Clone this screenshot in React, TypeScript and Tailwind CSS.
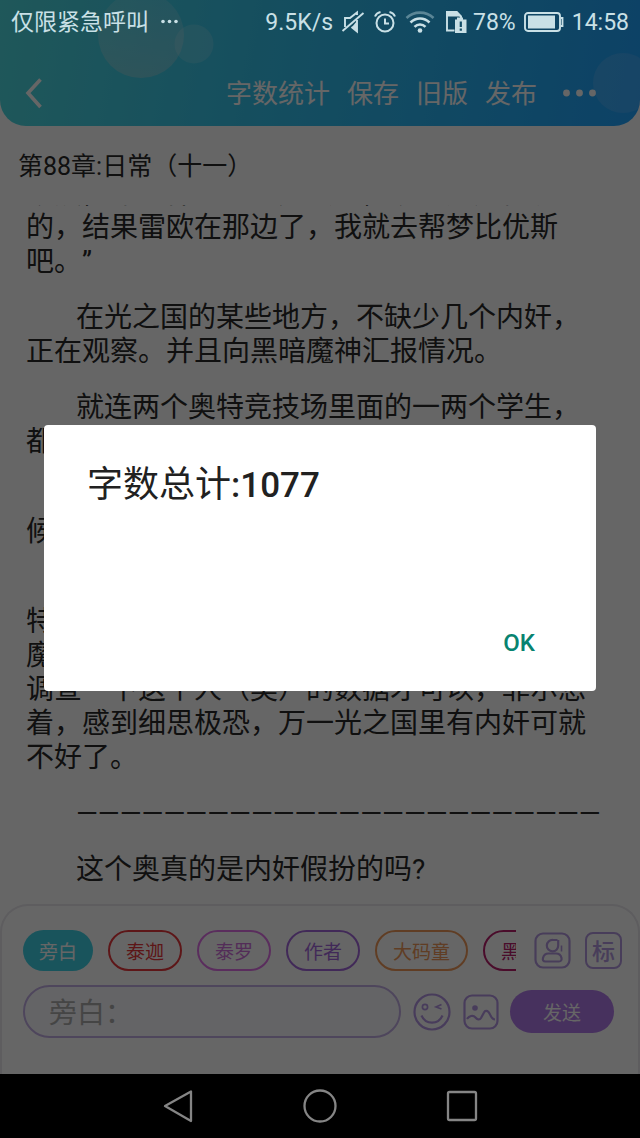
import React from "react";

const chips = [
  { name: "旁白", style: "bg-[#3fd2e6] text-white" },
  { name: "泰迦", style: "border-2 border-[#e8383c] text-[#e8383c]" },
  { name: "泰罗", style: "border-2 border-[#e072e8] text-[#d070dc]" },
  { name: "作者", style: "border-2 border-[#a468dc] text-[#a468dc]" },
  { name: "大码童", style: "border-2 border-[#f09a5a] text-[#f09a5a]" },
  { name: "黑", style: "border-2 border-[#b8206c] text-[#b8206c]" },
];

const paragraphs: { indent: boolean; lines: string[] }[] = [
  {
    indent: false,
    lines: ["既然，你们都已经有办法了，现在这边情况", "的，结果雷欧在那边了，我就去帮梦比优斯", "吧。”"],
  },
  { indent: true, lines: ["在光之国的某些地方，不缺少几个内奸，", "正在观察。并且向黑暗魔神汇报情况。"] },
  { indent: true, lines: ["就连两个奥特竞技场里面的一两个学生，", "都"] },
  { indent: true, lines: ["", "候"] },
  {
    indent: true,
    lines: [
      "",
      "特",
      "魔",
      "调查一下这个人（奥）的数据才可以，菲尔想",
      "着，感到细思极恐，万一光之国里有内奸可就",
      "不好了。",
    ],
  },
  { indent: true, lines: ["————————————————————————"] },
  { indent: true, lines: ["这个奥真的是内奸假扮的吗?"] },
];

function StatusBar() {
  return (
    <div className="absolute inset-x-0 top-0 z-20 flex h-11 items-center px-[11px] text-[23px] leading-none text-[#c9e0e6]">
      <span>仅限紧急呼叫</span>
      <svg className="ml-3 h-2 w-5" viewBox="0 0 20 8" fill="currentColor" aria-hidden="true">
        <circle cx="2" cy="3.500" r="1.800" />
        <circle cx="8.500" cy="3.500" r="1.800" />
        <circle cx="15" cy="3.500" r="1.800" />
      </svg>
      <span className="ml-auto">9.5K/s</span>
      <svg className="ml-2 h-6 w-6" viewBox="0 0 24 24" fill="none" stroke="currentColor" strokeWidth="1.900" aria-hidden="true">
        <path d="M4 17V8h5l7-5.500V5" />
        <path d="M16 10v11.500l-5.500-4.500" />
        <path d="M1.500 21 22.500 3" />
        <path d="M11 17l5-6v10z" fill="currentColor" stroke="none" />
      </svg>
      <svg className="ml-2 h-6 w-6" viewBox="0 0 24 24" fill="none" stroke="currentColor" strokeWidth="2" aria-hidden="true">
        <circle cx="12" cy="13" r="8.500" />
        <path d="M12 8.500V13.500h4" />
        <path d="M2 6.500C3 4 5 2.500 7.500 2M22 6.500C21 4 19 2.500 16.500 2" />
      </svg>
      <svg className="ml-2 h-6 w-[30px]" viewBox="0 0 30 24" fill="none" stroke="currentColor" strokeWidth="2.600" aria-hidden="true">
        <path d="M1.500 8C9 .800 21 .800 28.500 8" opacity=".4" />
        <path d="M5.500 12.500C11 7.200 19 7.200 24.500 12.500" />
        <path d="M9.500 16.800C12.500 13.800 17.500 13.800 20.500 16.800" />
        <circle cx="15" cy="20.500" r="2.300" fill="currentColor" stroke="none" />
      </svg>
      <svg className="ml-2.5 h-6 w-[22px]" viewBox="0 0 22 24" aria-hidden="true">
        <path d="M9.500 20.500H2V2h9.500l4.500 4.500V9" fill="none" stroke="currentColor" strokeWidth="1.900" />
        <path d="M1 1h11l5 5.500H1z" fill="currentColor" />
        <path d="M12 7.500h6v2h3.500v13.500H10V9.500h2z" fill="currentColor" />
        <path d="M15.800 11.500v5.500M15.800 18.500v2.300" stroke="#124c66" strokeWidth="2.200" />
      </svg>
      <span className="ml-[6px]">78%</span>
      <svg className="ml-2 h-6 w-10" viewBox="0 0 40 24" aria-hidden="true">
        <rect x="1" y="3" width="35" height="18" rx="3" fill="none" stroke="currentColor" strokeWidth="1.900" />
        <rect x="4" y="5.500" width="27" height="13" fill="currentColor" />
        <path d="M37 8h1.500v8H37" fill="none" stroke="currentColor" strokeWidth="1.800" />
      </svg>
      <span className="ml-2">14:58</span>
    </div>
  );
}

function Header() {
  const button = "whitespace-nowrap";
  return (
    <header className="relative shrink-0 overflow-hidden rounded-b-[26px] bg-linear-100 from-[#4fdbe0] via-[#36c4ec] via-40% to-[#20a4ff] pt-[62px] text-white">
      <svg className="absolute left-0 top-0 h-full w-56" viewBox="0 0 224 126" aria-hidden="true">
        <defs>
          <linearGradient id="bubble" x1="0" y1="0" x2="0" y2="1">
            <stop offset="0" stopColor="#fff" stopOpacity=".12" />
            <stop offset="1" stopColor="#ffd9cf" stopOpacity=".26" />
          </linearGradient>
        </defs>
        <circle cx="194" cy="44" r="19.500" fill="#fff" opacity=".15" />
        <circle cx="141" cy="35" r="43" fill="url(#bubble)" />
      </svg>
      <svg className="absolute right-0 top-0 h-full w-20" viewBox="0 0 80 126" aria-hidden="true">
        <circle cx="63" cy="83" r="30" fill="#c8d4ff" opacity=".16" />
      </svg>
      <div className="relative flex h-16 items-center gap-[17px] pl-5 pr-[42px] text-[26px] leading-none">
        <button type="button" aria-label="返回" className="mr-auto">
          <svg className="h-9 w-7" viewBox="0 0 28 36" fill="none" stroke="currentColor" strokeWidth="3.600" aria-hidden="true">
            <path d="M20.500 3.500 8 17l12.500 14" />
          </svg>
        </button>
        <button type="button" className={button}>字数统计</button>
        <button type="button" className={button}>保存</button>
        <button type="button" className={button}>旧版</button>
        <button type="button" className={button}>发布</button>
        <button type="button" aria-label="更多" className="pl-2">
          <svg className="h-3 w-9" viewBox="0 0 36 12" fill="currentColor" aria-hidden="true">
            <circle cx="4.500" cy="5" r="3.400" />
            <circle cx="17.500" cy="5" r="3.400" />
            <circle cx="30.500" cy="5" r="3.400" />
          </svg>
        </button>
      </div>
    </header>
  );
}

function Composer() {
  return (
    <form
      className="flex h-[170px] shrink-0 flex-col gap-[14px] rounded-t-[28px] border-2 border-b-0 border-[#eae8ee] bg-white pl-[21px] pr-4 pt-6"
      onSubmit={(e) => e.preventDefault()}
    >
      <div className="flex items-center">
        <div className="flex min-w-0 max-w-[493px] flex-1 gap-[15px] overflow-hidden">
          {chips.map((c) => (
            <button
              key={c.name}
              type="button"
              className={`h-[41px] shrink-0 rounded-full px-4 pt-[3px] text-[19px] leading-none ${c.style}`}
            >
              {c.name}
            </button>
          ))}
        </div>
        <button type="button" aria-label="角色" className="ml-[18px] text-[#b49ae0]">
          <svg className="h-[37px] w-[37px]" viewBox="0 0 37 37" fill="none" stroke="currentColor" strokeWidth="2.200" aria-hidden="true">
            <rect x="1.500" y="1.500" width="34" height="34" rx="7.500" />
            <path d="M23.500 8h-4.500a5.700 5.700 0 1 0 5.200 5.500V8" />
            <path d="M27.500 13.500v6" strokeWidth="1.600" />
            <path d="M11.500 29.500c-2.500 0-3-1.500-2.500-3.500.700-3 3-4.500 5.500-4.500h7.500c3 0 5 2 5.500 4.500.4 2-.5 3.500-2.500 3.500z" />
          </svg>
        </button>
        <button
          type="button"
          className="ml-[14px] h-[37px] w-[37px] shrink-0 rounded-lg border-2 border-[#b49ae0] pt-[3px] text-[23px] font-medium leading-none text-[#b49ae0]"
        >
          标
        </button>
      </div>
      <div className="flex items-center">
        <input
          aria-label="旁白"
          placeholder="旁白："
          className="h-[53px] w-0 max-w-[378px] flex-1 rounded-full border-2 border-[#c4aee6] bg-[#fafaff] px-6 pt-1 text-[28px] text-black outline-none placeholder:text-[#adadad]"
        />
        <button type="button" aria-label="表情" className="ml-3 text-[#b496e4]">
          <svg className="h-[38px] w-[38px]" viewBox="0 0 38 38" fill="none" stroke="currentColor" strokeWidth="2.200" aria-hidden="true">
            <circle cx="19" cy="19" r="17.500" />
            <circle cx="12" cy="14" r="2.600" strokeWidth="1.700" />
            <path d="M28.500 11.500 23 14l5.500 2" strokeWidth="1.700" />
            <path d="M8.500 22.500c4 9.500 17 9.500 21 0" />
          </svg>
        </button>
        <button type="button" aria-label="图片" className="ml-3 text-[#b496e4]">
          <svg className="h-[36px] w-[36px]" viewBox="0 0 36 36" fill="none" stroke="currentColor" strokeWidth="2.200" aria-hidden="true">
            <rect x="1.500" y="1.500" width="33" height="33" rx="7.500" />
            <circle cx="12" cy="14" r="2.800" fill="currentColor" stroke="none" />
            <path d="M4 25c2-3 6-4.500 8.500-1.500 1.500 2 4 3 5.500.5l3-5.500c1-2 3-2 4.500-.5 2 2 2.500 7.500 6.500 7.500" />
          </svg>
        </button>
        <button type="submit" className="ml-[11px] h-[43px] w-[104px] shrink-0 rounded-full bg-[#b27aea] pt-[3px] text-[19px] leading-none text-white">
          发送
        </button>
      </div>
    </form>
  );
}

function CountDialog() {
  return (
    <div className="absolute inset-0 z-10 flex items-center bg-black/60 px-11 pt-[41px]">
      <div role="dialog" aria-modal="true" aria-labelledby="count-title" className="flex w-full flex-col rounded bg-white px-[43px] pb-6 pt-[38px]">
        <h2 id="count-title" className="text-4xl leading-[44px] text-[#212121]">
          字数总计<span className="text-[35px] font-medium">:1077</span>
        </h2>
        <button type="button" className="mt-[111px] h-12 self-end px-[18px] text-2xl font-medium text-[#088370]">
          OK
        </button>
      </div>
    </div>
  );
}

function NavBar() {
  return (
    <nav className="flex h-16 shrink-0 items-center justify-center gap-[106px] bg-black text-[#858585]">
      <button type="button" aria-label="后退">
        <svg className="h-9 w-9" viewBox="0 0 36 36" fill="none" stroke="currentColor" strokeWidth="2.300" strokeLinejoin="round" aria-hidden="true">
          <path d="M31 3.500v29.500L5 18z" />
        </svg>
      </button>
      <button type="button" aria-label="主页">
        <svg className="h-9 w-9" viewBox="0 0 36 36" fill="none" stroke="currentColor" strokeWidth="2.300" aria-hidden="true">
          <circle cx="18" cy="18" r="15.500" />
        </svg>
      </button>
      <button type="button" aria-label="最近任务">
        <svg className="h-9 w-9" viewBox="0 0 36 36" fill="none" stroke="currentColor" strokeWidth="2.300" aria-hidden="true">
          <rect x="4" y="4" width="28" height="28" rx="1.500" />
        </svg>
      </button>
    </nav>
  );
}

export default function App() {
  return (
    <div className="flex h-screen flex-col bg-black font-[Roboto,'Noto_Sans_CJK_SC',sans-serif] [text-spacing-trim:space-all]" lang="zh-CN">
      <div className="relative flex min-h-0 flex-1 flex-col bg-white">
        <StatusBar />
        <Header />
        <h1 className="shrink-0 px-[18px] pb-[22px] pt-[25px] text-[25px] leading-[32px] text-[#2a2a2a]">第88章:日常（十一）</h1>
        <main className="flex min-h-0 flex-1 flex-col justify-end gap-[22px] overflow-hidden px-[26px] pb-[17px] text-[28px] leading-[34px] text-[#2a2a2a]">
          {paragraphs.map((p, i) => (
            <p key={i} className={p.indent ? "shrink-0 whitespace-nowrap indent-[50px]" : "shrink-0 whitespace-nowrap"}>
              {p.lines.map((line, n) => (
                <React.Fragment key={n}>
                  {n > 0 && <br />}
                  {line}
                </React.Fragment>
              ))}
            </p>
          ))}
        </main>
        <Composer />
        <CountDialog />
      </div>
      <NavBar />
    </div>
  );
}
